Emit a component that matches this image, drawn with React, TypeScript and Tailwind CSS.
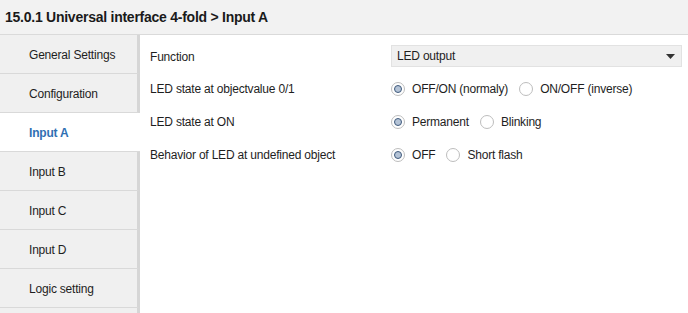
import React from "react";

const menu = [
  "General Settings",
  "Configuration",
  "Input A",
  "Input B",
  "Input C",
  "Input D",
  "Logic setting",
  "",
];

function Radio({ checked, label }: { checked?: boolean; label: string }) {
  return (
    <label className="flex items-center">
      <span className="flex h-[14px] w-[14px] items-center justify-center rounded-full border border-[#bdbdbd] bg-white">
        {checked && <span className="h-[8px] w-[8px] rounded-full border border-[#3f5a7c] bg-[#b4c3d6]" />}
      </span>
      <span className="ml-[7px] mr-[11px]">{label}</span>
    </label>
  );
}

function Row({ label, children }: { label: string; children: React.ReactNode }) {
  return (
    <div className="flex h-[33px] items-center">
      <div className="w-[241px] shrink-0">{label}</div>
      <div className="flex items-center">{children}</div>
    </div>
  );
}

export default function App() {
  return (
    <div
      className="h-[313px] w-[688px] overflow-hidden bg-white text-[12px] tracking-[-0.2px] text-[#1e1e1e]"
      style={{ fontFamily: '"Liberation Sans", Arial, sans-serif' }}
    >
      <div className="flex h-[35px] items-center border-b border-[#dadada] bg-[#f2f2f2] pl-[5px] text-[14px] font-bold tracking-[-0.25px] text-[#1a1a1a]">
        15.0.1 Universal interface 4-fold &gt; Input A
      </div>
      <div className="flex">
        <div className="w-[140px] shrink-0">
          {menu.map((m) => {
            const active = m === "Input A";
            return (
              <div
                key={m}
                className={
                  active
                    ? "flex h-[39px] items-center border-b border-[#d9d9d9] bg-white pl-[29px] pt-[2px] font-bold text-[#2f6fb3]"
                    : "flex h-[39px] items-center border-b border-r-[3px] border-b-[#d9d9d9] border-r-[#d6d6d6] bg-[#f0f0f0] pl-[29px] pt-[2px]"
                }
              >
                {m}
              </div>
            );
          })}
        </div>
        <div className="flex-1 pl-[10px] pr-[6px] pt-[10px]">
          <div className="flex h-[22px] items-center">
            <div className="w-[241px] shrink-0 pt-[1px]">Function</div>
            <div className="flex h-[22px] flex-1 items-center justify-between border border-[#e2e2e2] bg-[#f0f0f0] pl-[5px] pr-[6px]">
              <span>LED output</span>
              <svg width="9" height="5" viewBox="0 0 9 5">
                <path d="M0 0h9L4.5 5z" fill="#333" />
              </svg>
            </div>
          </div>
          <div className="mt-[5px]">
            <Row label="LED state at objectvalue 0/1">
              <Radio checked label="OFF/ON (normaly)" />
              <Radio label="ON/OFF (inverse)" />
            </Row>
            <Row label="LED state at ON">
              <Radio checked label="Permanent" />
              <Radio label="Blinking" />
            </Row>
            <Row label="Behavior of LED at undefined object">
              <Radio checked label="OFF" />
              <Radio label="Short flash" />
            </Row>
          </div>
        </div>
      </div>
    </div>
  );
}
